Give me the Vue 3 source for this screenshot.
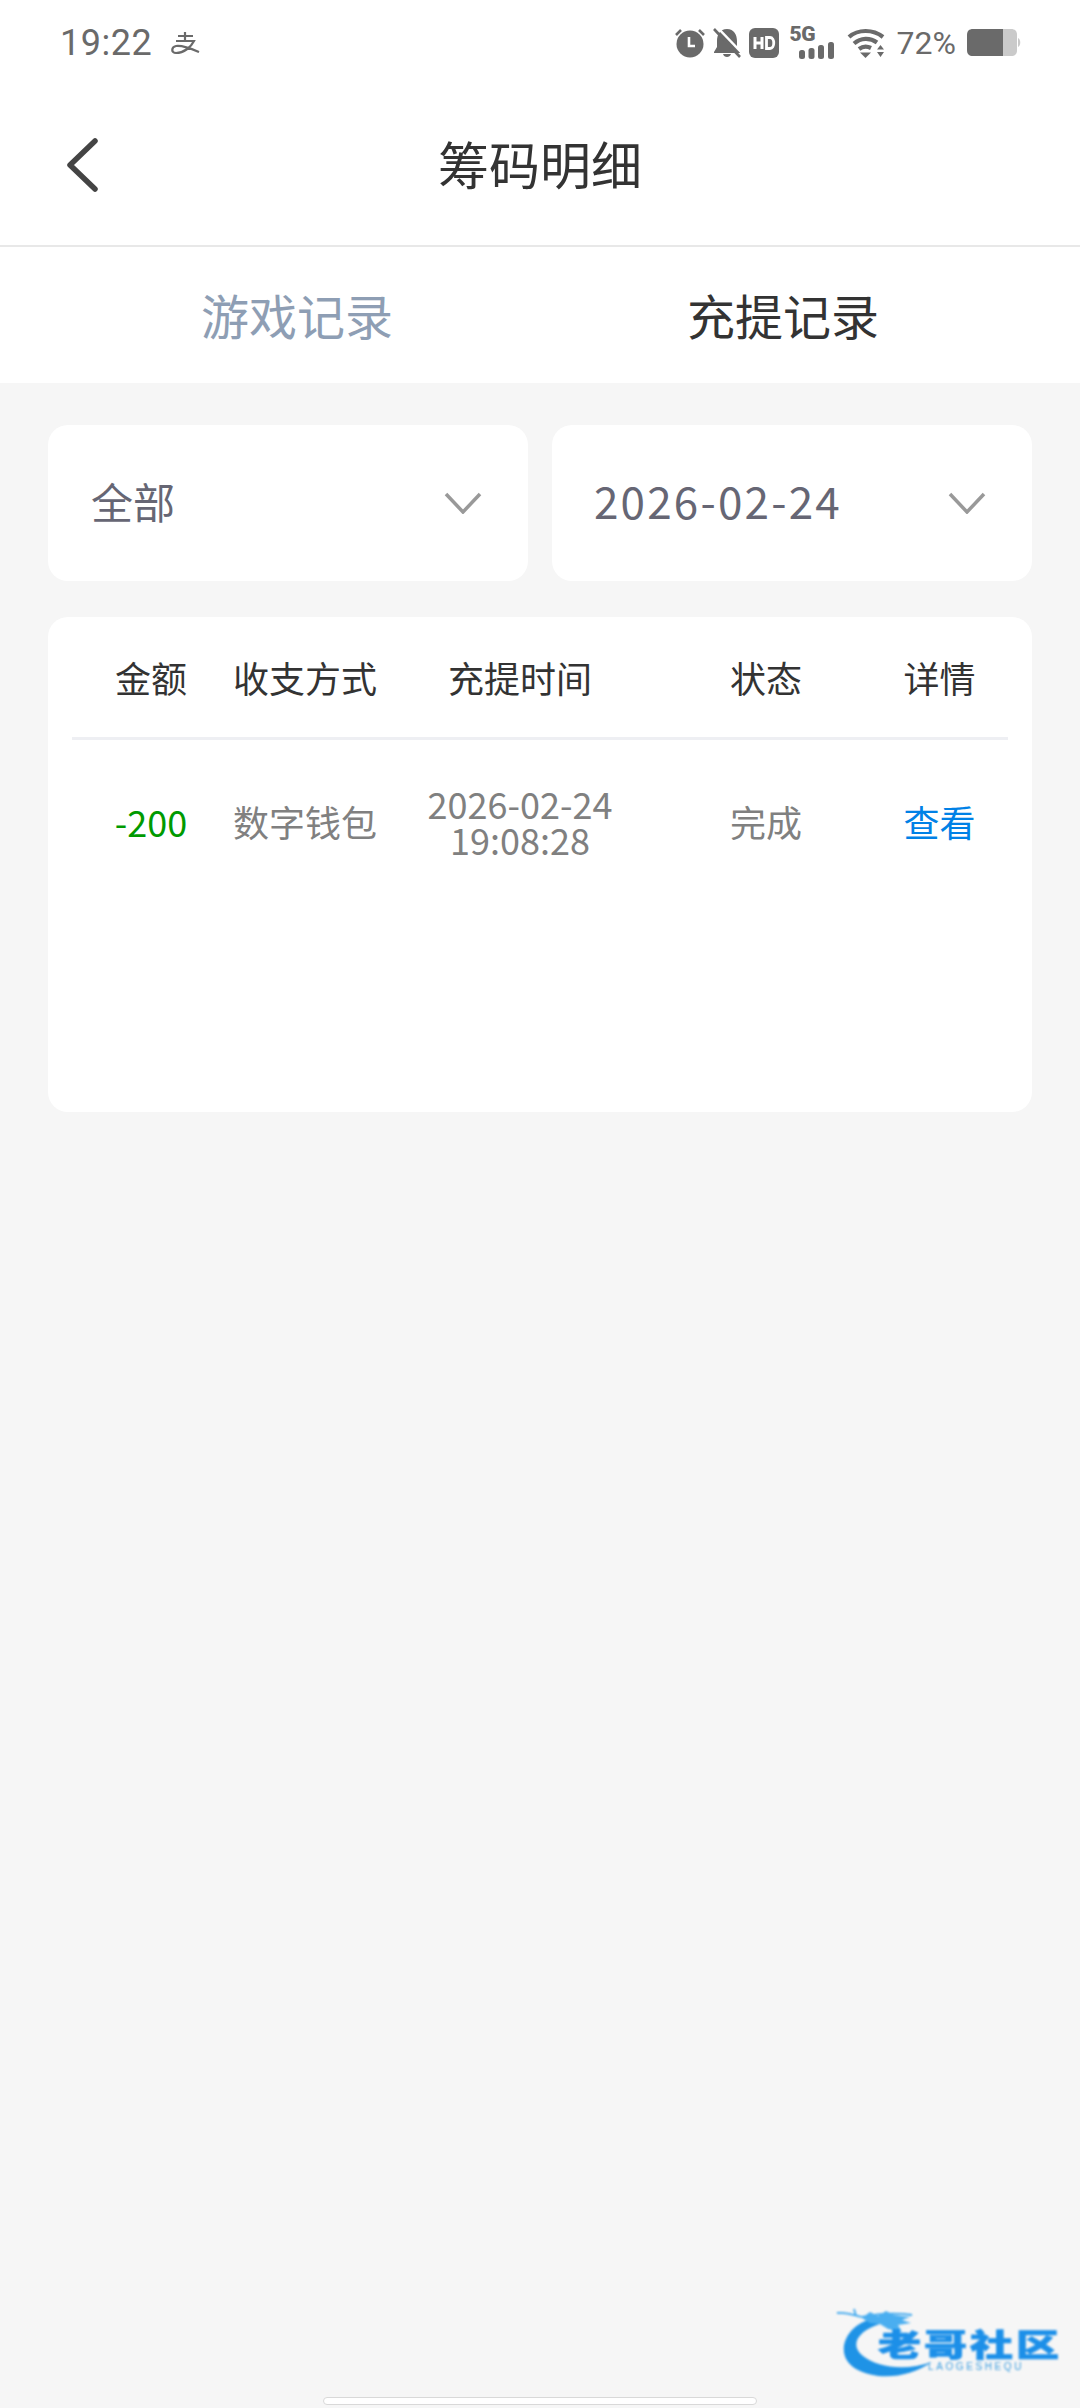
<script setup>
const headers = [
  { label: "金额", key: "amount" },
  { label: "收支方式", key: "method" },
  { label: "充提时间", key: "time" },
  { label: "状态", key: "status" },
  { label: "详情", key: "detail" },
];
</script>

<template>
  <main class="page">
    <header class="top">
      <div class="status-bar">
        <div class="status-left">
          <span class="clock">19:22</span>
          <svg class="alipay" viewBox="0 0 30 24" width="30" height="24">
            <path d="M8 5H23M15 1V9M6 10H24C21 16 14 22 6 22C1 22 1 16 6 15C13 14 22 18 29 21" fill="none" stroke="#6a6a6a" stroke-width="2.2" />
          </svg>
        </div>
        <div class="status-right">
          <svg viewBox="0 0 30 30" width="30" height="30" class="ic-alarm">
            <circle cx="15" cy="16" r="13.5" fill="#6a6a6a" />
            <path d="M14 9V18H20" fill="none" stroke="#fff" stroke-width="2.6" />
            <path d="M1 7L6 2M29 7L24 2" stroke="#6a6a6a" stroke-width="2.6" />
          </svg>
          <svg viewBox="0 0 28 30" width="28" height="30" class="ic-bell">
            <path d="M14 1C7 1 4 7 4 13V19L1 24V25H27V24L24 19V13C24 7 21 1 14 1ZM10 26H18C17 30 11 30 10 26Z" fill="#6a6a6a" />
            <path d="M4 -1L30 26" stroke="#fff" stroke-width="2.4" />
            <path d="M1 1L27 29" stroke="#6a6a6a" stroke-width="2.6" />
          </svg>
          <svg viewBox="0 0 30 30" width="30" height="30" class="ic-hd">
            <rect width="30" height="30" rx="6" fill="#6a6a6a" />
            <path d="M6 9V21M13 9V21M6 15H13" stroke="#fff" stroke-width="3" fill="none" />
            <path d="M17.5 9.5V20.500H21C26 20.500 26 9.500 21 9.500Z" stroke="#fff" stroke-width="2.8" fill="none" />
          </svg>
          <div class="ic-signal">
            <span class="net">5G</span>
            <svg viewBox="0 0 36 17" width="36" height="17">
              <rect x="0" y="8" width="6" height="9" rx="2.500" fill="#6a6a6a" />
              <rect x="9.500" y="6" width="6" height="11" rx="2.500" fill="#6a6a6a" />
              <rect x="19" y="3" width="6" height="14" rx="2.500" fill="#6a6a6a" />
              <rect x="29" y="0" width="6" height="17" rx="2.500" fill="#6a6a6a" />
            </svg>
          </div>
          <svg viewBox="0 0 38 30" width="38" height="30" class="ic-wifi">
            <path d="M2 9C11 1 26 1 36 9M7 15.500C14 9.500 23 9.500 30 14.500M12 21C16 18 20 18 24 20" fill="none" stroke="#6a6a6a" stroke-width="4.200" />
            <path d="M13 24.500H24L18.500 30Z" fill="#6a6a6a" />
            <path d="M30 21.500L33.500 17L37 21.500ZM30 24H37L33.500 29Z" fill="#6a6a6a" />
          </svg>
          <span class="battery-text">72%</span>
          <svg viewBox="0 0 54 28" width="54" height="28" class="ic-battery">
            <path d="M6 0H36V27H6C2 27 0 25 0 21V6C0 2 2 0 6 0Z" fill="#6a6a6a" />
            <path d="M36 0H44C48 0 50 2 50 6V21C50 25 48 27 44 27H36Z" fill="#cacaca" />
            <path d="M51 9C54 10 54 17 51 18Z" fill="#cacaca" />
          </svg>
        </div>
      </div>
      <nav class="nav">
        <svg class="back" viewBox="0 0 34 56" width="34" height="56">
          <path d="M30 4L5 28L30 52" fill="none" stroke="#444" stroke-width="5.500" stroke-linecap="round" stroke-linejoin="round" />
        </svg>
        <h1 class="nav-title">筹码明细</h1>
      </nav>
    </header>

    <section class="tabs">
      <div class="tab">游戏记录</div>
      <div class="tab active">充提记录</div>
    </section>

    <section class="filters">
      <div class="select">
        <span>全部</span>
        <svg viewBox="0 0 38 22" width="38" height="22">
          <path d="M2 2L19 20L36 2" fill="none" stroke="#999" stroke-width="3.500" />
        </svg>
      </div>
      <div class="select">
        <span class="date">2026-02-24</span>
        <svg viewBox="0 0 38 22" width="38" height="22">
          <path d="M2 2L19 20L36 2" fill="none" stroke="#999" stroke-width="3.500" />
        </svg>
      </div>
    </section>

    <section class="card">
      <div class="grid head">
        <div v-for="h in headers" :key="h.key">{{ h.label }}</div>
      </div>
      <div class="grid row">
        <div class="amount">-200</div>
        <div>数字钱包</div>
        <div class="time">2026-02-24<br />19:08:28</div>
        <div>完成</div>
        <div class="link">查看</div>
      </div>
    </section>

    <div class="logo">
      <svg viewBox="0 0 100 76" width="100" height="76">
        <path d="M32 14C8 22 -2 50 20 63C42 75 72 72 96 56C70 65 42 62 27 50C12 38 24 24 44 18Z" fill="#1f93e6" />
        <path d="M1 7C10 6 18 9 26 11M20 10L18 3M26 11C40 8 56 6 76 9" fill="none" stroke="#3aa6ee" stroke-width="1.800" />
        <path d="M26 12L34 6L42 10L50 5L58 9L74 11L66 14L75 17L62 19L66 26L52 23L44 18L34 17Z" fill="#4aaef0" />
      </svg>
      <span class="logo-cn">老哥社区</span>
      <span class="logo-en">LAOGESHEQU</span>
    </div>
    <div class="home-bar"></div>
  </main>
</template>

<style>
body {
  margin: 0;
  background: #f6f6f6;
}
</style>

<style scoped>
.page {
  position: relative;
  width: 1080px;
  height: 2408px;
  overflow: hidden;
  background: #f6f6f6;
  font-family: "Noto Sans CJK SC", "Noto Sans", sans-serif;
}

.top {
  background: #fff;
  border-bottom: 2px solid #e8e8e8;
}

.status-bar {
  height: 85px;
  box-sizing: border-box;
  padding: 0 59px 0 60px;
  display: flex;
  justify-content: space-between;
  align-items: center;
  color: #6a6a6a;
}

.status-left {
  display: flex;
  align-items: center;
  gap: 18px;
}

.clock {
  font-family: Roboto, sans-serif;
  font-size: 36px;
  letter-spacing: 0.5px;
}

.status-right {
  display: flex;
  align-items: center;
}

.ic-bell {
  margin-left: 8px;
}

.ic-hd {
  margin-left: 8px;
}

.ic-signal {
  margin-left: 11px;
  width: 45px;
  height: 32px;
  position: relative;
}

.net {
  position: absolute;
  left: 0;
  top: -3px;
  font-family: Roboto, sans-serif;
  font-weight: 900;
  font-size: 21px;
  line-height: 20px;
  letter-spacing: -0.5px;
}

.ic-signal svg {
  position: absolute;
  right: 0;
  bottom: 0;
}

.ic-wifi {
  margin-left: 12px;
}

.battery-text {
  margin-left: 12px;
  font-family: Roboto, sans-serif;
  font-size: 32px;
  line-height: 32px;
}

.ic-battery {
  margin-left: 11px;
}

.nav {
  height: 160px;
  display: flex;
  align-items: center;
  justify-content: center;
  position: relative;
}

.back {
  position: absolute;
  left: 65px;
  top: 52px;
}

.nav-title {
  margin: 0 0 4px;
  font-size: 51px;
  font-weight: 400;
  color: #333;
}

.tabs {
  height: 136px;
  padding: 0 54px;
  background: #fff;
  display: flex;
  align-items: center;
}

.tab {
  flex: 1;
  text-align: center;
  font-size: 48px;
  color: #8e9eb4;
  line-height: 60px;
  margin-bottom: 2px;
}

.tab.active {
  color: #333;
}

.filters {
  margin: 42px 48px 0;
  display: flex;
  gap: 24px;
}

.select {
  flex: 1;
  height: 156px;
  box-sizing: border-box;
  padding: 0 46px 0 43px;
  background: #fff;
  border-radius: 20px;
  display: flex;
  align-items: center;
  justify-content: space-between;
  font-size: 42px;
  color: #666674;
}

.select span {
  margin-bottom: 6px;
}

.select .date {
  font-size: 44px;
  letter-spacing: 2.2px;
  margin-left: -1px;
}

.card {
  margin: 36px 48px 0;
  height: 495px;
  box-sizing: border-box;
  padding: 0 24px;
  background: #fff;
  border-radius: 20px;
}

.grid {
  display: grid;
  grid-template-columns: 158px 150px 280px 212px 135px;
  text-align: center;
  font-size: 36px;
  align-items: center;
}

.head {
  height: 120px;
  border-bottom: 3px solid #eeeff3;
  color: #333;
}

.row {
  height: 162px;
  color: #808080;
  line-height: 36px;
}

.time {
  line-height: 36px;
}

.amount {
  color: #009a00;
}

.link {
  color: #0081e6;
}

.logo {
  position: absolute;
  left: 836px;
  top: 2306px;
  width: 234px;
  height: 76px;
  filter: blur(0.9px);
}

.logo-cn {
  position: absolute;
  left: 42px;
  top: 8px;
  width: 200px;
  font-size: 43px;
  line-height: 56px;
  font-weight: 900;
  letter-spacing: 3px;
  color: #1c8fe8;
  -webkit-text-stroke: 1px #1c8fe8;
  transform: scaleY(0.72);
  white-space: nowrap;
}

.logo-en {
  position: absolute;
  left: 92px;
  top: 55px;
  font-family: "Liberation Sans", sans-serif;
  font-size: 10px;
  line-height: 12px;
  letter-spacing: 2.6px;
  color: #3d9ee0;
  white-space: nowrap;
}

.logo svg {
  position: absolute;
  left: 0;
  top: 0;
}

.home-bar {
  position: absolute;
  left: 323px;
  top: 2397px;
  width: 434px;
  height: 8px;
  box-sizing: border-box;
  background: #fff;
  border: 1px solid #d9d9d9;
  border-radius: 4px;
}
</style>
